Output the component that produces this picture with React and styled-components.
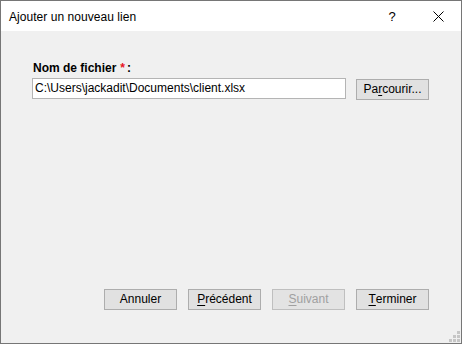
import React from 'react'
import styled, { createGlobalStyle } from 'styled-components'

const GlobalStyle = createGlobalStyle`
  html, body {
    margin: 0;
    padding: 0;
    background: #ffffff;
  }
  body {
    font-family: 'Liberation Sans', Arial, sans-serif;
    font-size: 12px;
    color: #000;
  }
`

const Window = styled.div`
  box-sizing: border-box;
  width: 462px;
  height: 344px;
  border: 1px solid #767676;
  display: flex;
  flex-direction: column;
  background: #f0f0f0;
`

const TitleBar = styled.div`
  height: 30px;
  display: flex;
  align-items: center;
  background: #ffffff;
`

const Title = styled.div`
  flex: 1;
  padding-left: 8px;
  padding-top: 1px;
  font-size: 12px;
  letter-spacing: 0.05px;
  color: #000;
`

const CaptionButton = styled.div`
  width: 46px;
  height: 30px;
  display: flex;
  align-items: center;
  justify-content: center;
  font-size: 13px;
  color: #000;
`

const Body = styled.div`
  flex: 1;
  display: flex;
  flex-direction: column;
  padding: 30px 32px 33px 31px;
`

const Label = styled.div`
  font-weight: bold;
  font-size: 12px;
  line-height: 15px;
  margin-bottom: 2px;
  padding-left: 1px;
`

const Required = styled.span`
  color: #e81123;
  margin: 0 2px 0 4px;
`

const FieldRow = styled.div`
  display: flex;
  align-items: flex-start;
  gap: 10px;
`

const TextBox = styled.div`
  box-sizing: border-box;
  width: 314px;
  height: 21px;
  border: 1px solid #b4b4b4;
  background: #ffffff;
  padding: 0 2px;
  line-height: 19px;
  white-space: nowrap;
  overflow: hidden;
`

const Button = styled.div`
  box-sizing: border-box;
  width: 73px;
  height: 21px;
  margin-top: ${p => (p.$offset ? '1px' : '0')};
  border: 1px solid ${p => (p.$disabled ? '#bfbfbf' : '#adadad')};
  background: ${p => (p.$disabled ? '#e3e3e3' : '#e1e1e1')};
  color: ${p => (p.$disabled ? '#a0a0a0' : '#000')};
  display: flex;
  align-items: center;
  justify-content: center;
  font-size: 12px;
  line-height: 19px;
`

const Footer = styled.div`
  margin-top: auto;
  display: flex;
  justify-content: flex-end;
  gap: 11px;
`

const Key = styled.span`
  text-decoration: underline;
  text-underline-offset: 2px;
`

const Grip = styled.svg`
  position: absolute;
  right: 2px;
  bottom: 2px;
`

const Frame = styled.div`
  position: relative;
  width: 462px;
  height: 344px;
`

function CloseIcon() {
  return (
    <svg width="11" height="11" viewBox="0 0 11 11">
      <path d="M0.5 0.5 L10.5 10.5 M10.5 0.5 L0.5 10.5" stroke="#000" strokeWidth="1" fill="none" />
    </svg>
  )
}

function SizeGrip() {
  const dots = [
    [8, 0],
    [4, 4],
    [8, 4],
    [0, 8],
    [4, 8],
    [8, 8]
  ]
  return (
    <Grip width="11" height="11" viewBox="0 0 11 11">
      {dots.map(([x, y], i) => (
        <rect key={i} x={x} y={y} width="3" height="3" fill="#c6c6c6" />
      ))}
    </Grip>
  )
}

export default function App() {
  return (
    <>
      <GlobalStyle />
      <Frame>
        <Window>
          <TitleBar>
            <Title>Ajouter un nouveau lien</Title>
            <CaptionButton>?</CaptionButton>
            <CaptionButton>
              <CloseIcon />
            </CaptionButton>
          </TitleBar>
          <Body>
            <Label>
              Nom de fichier<Required>*</Required>:
            </Label>
            <FieldRow>
              <TextBox>C:\Users\jackadit\Documents\client.xlsx</TextBox>
              <Button $offset>
                Pa<Key>r</Key>courir...
              </Button>
            </FieldRow>
            <Footer>
              <Button>Annuler</Button>
              <Button>
                <Key>P</Key>récédent
              </Button>
              <Button $disabled>
                <Key>S</Key>uivant
              </Button>
              <Button>
                <Key>T</Key>erminer
              </Button>
            </Footer>
          </Body>
        </Window>
        <SizeGrip />
      </Frame>
    </>
  )
}
